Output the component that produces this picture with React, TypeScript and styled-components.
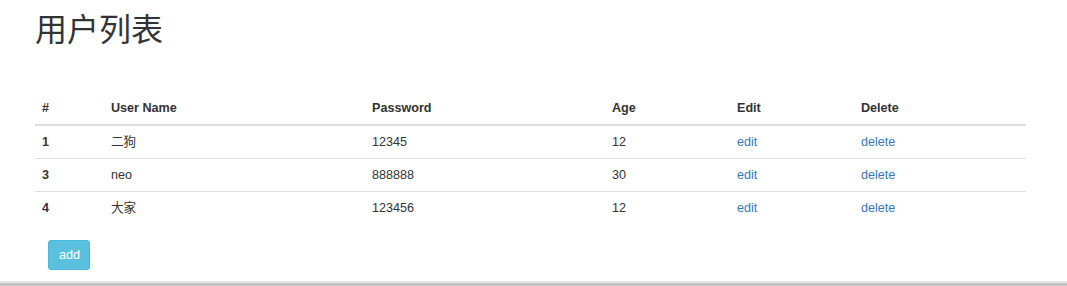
import React from "react";
import styled, { createGlobalStyle } from "styled-components";

const GlobalStyle = createGlobalStyle`
  html, body { margin: 0; padding: 0; background: #fff; }
  body {
    font-family: "Liberation Sans", Arial, "Noto Sans CJK SC", sans-serif;
    font-size: 12.6px;
    line-height: 18px;
    color: #333;
  }
`;

const Page = styled.div`
  width: 1067px;
  height: 286px;
  display: flex;
  flex-direction: column;
  box-sizing: border-box;
  overflow: hidden;
`;

const Container = styled.div`
  flex: 1;
  padding: 12px 41px 0 35px;
  display: flex;
  flex-direction: column;
`;

const Title = styled.h1`
  margin: 0 0 44px 0;
  font-family: "Liberation Sans", "Noto Sans CJK SC", sans-serif;
  font-size: 32px;
  line-height: 36px;
  font-weight: 400;
  color: #333;
`;

const Table = styled.table`
  width: 991px;
  border-collapse: collapse;
  border-spacing: 0;
  table-layout: fixed;
`;

const Th = styled.th<{ $w: number }>`
  box-sizing: border-box;
  width: ${(p) => p.$w}px;
  text-align: left;
  font-weight: 700;
  padding: 7px;
  line-height: 18px;
  border-bottom: 2px solid #ddd;
  vertical-align: bottom;
`;

const Td = styled.td<{ $bold?: boolean }>`
  padding: 7px;
  line-height: 18px;
  border-top: 1px solid #ddd;
  font-weight: ${(p) => (p.$bold ? 700 : 400)};
  font-family: "Liberation Sans", Arial, "Noto Sans CJK SC", sans-serif;
`;

const Link = styled.a`
  color: #337ab7;
  text-decoration: none;
  cursor: pointer;
`;

const ButtonRow = styled.div`
  padding: 16px 0 0 13px;
`;

const AddButton = styled.button`
  font-family: "Liberation Sans", Arial, sans-serif;
  font-size: 12.6px;
  line-height: 18px;
  padding: 5px 10px;
  height: 30px;
  width: 42px;
  color: #fff;
  background: #5bc0de;
  border: 1px solid #46b8da;
  border-radius: 3px;
  cursor: pointer;
`;

const BottomBar = styled.div`
  height: 5px;
  border-top: 2px solid #e6e6e6;
  background: #c3c3c3;
  box-sizing: border-box;
`;

const columns = [
  { label: "#", w: 69 },
  { label: "User Name", w: 261 },
  { label: "Password", w: 240 },
  { label: "Age", w: 125 },
  { label: "Edit", w: 124 },
  { label: "Delete", w: 172 },
];

const users = [
  { id: 1, name: "二狗", password: "12345", age: 12 },
  { id: 3, name: "neo", password: "888888", age: 30 },
  { id: 4, name: "大家", password: "123456", age: 12 },
];

export default function App() {
  return (
    <Page>
      <GlobalStyle />
      <Container>
        <Title>用户列表</Title>
        <Table>
          <thead>
            <tr>
              {columns.map((c) => (
                <Th key={c.label} $w={c.w}>
                  {c.label}
                </Th>
              ))}
            </tr>
          </thead>
          <tbody>
            {users.map((u) => (
              <tr key={u.id}>
                <Td $bold>{u.id}</Td>
                <Td>{u.name}</Td>
                <Td>{u.password}</Td>
                <Td>{u.age}</Td>
                <Td>
                  <Link>edit</Link>
                </Td>
                <Td>
                  <Link>delete</Link>
                </Td>
              </tr>
            ))}
          </tbody>
        </Table>
        <ButtonRow>
          <AddButton>add</AddButton>
        </ButtonRow>
      </Container>
      <BottomBar />
    </Page>
  );
}
